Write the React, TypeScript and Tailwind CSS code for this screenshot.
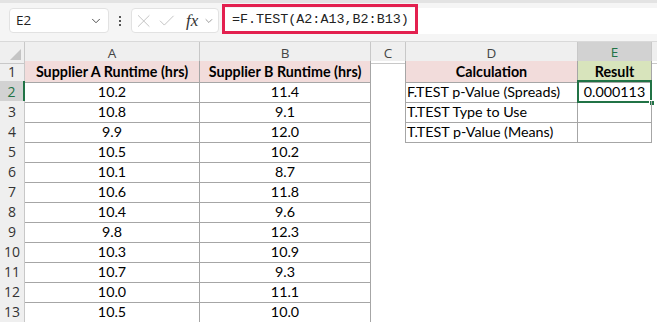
import { ChevronDown, X, Check } from "lucide-react";

const colA = ["10.2", "10.8", "9.9", "10.5", "10.1", "10.6", "10.4", "9.8", "10.3", "10.7", "10.0", "10.5"];
const colB = ["11.4", "9.1", "12.0", "10.2", "8.7", "11.8", "9.6", "12.3", "10.9", "9.3", "11.1", "10.0"];
const calc = ["F.TEST p-Value (Spreads)", "T.TEST Type to Use", "T.TEST p-Value (Means)"];

const grid = "grid grid-cols-[25px_175px_171px_35px_172px_74px_1fr]";
const cellFont = { fontFamily: "Lato, 'Liberation Sans', sans-serif" };
const uiFont = { fontFamily: "'Open Sans', 'Noto Sans', sans-serif" };

function Toolbar() {
  return (
    <div className="h-[41px] bg-[#f5f5f5] flex flex-col">
      <div className="h-[3px] bg-[#e3e3e3]" />
      <div className="flex items-start pt-[5px] relative">
        <div
          className="ml-[9px] w-[100px] h-[25px] bg-white border border-[#e2e2e2] rounded-[4px] flex items-center justify-between pl-[6px] pr-[5px] text-[13.5px] text-[#222]"
          style={uiFont}
        >
          <span>E2</span>
          <ChevronDown size={14} strokeWidth={1.6} className="text-[#444]" />
        </div>
        <div className="w-[22px] h-[25px] flex flex-col items-center justify-center gap-[2px]">
          <span className="w-[2px] h-[2px] bg-[#555]" />
          <span className="w-[2px] h-[2px] bg-[#555]" />
          <span className="w-[2px] h-[2px] bg-[#555]" />
        </div>
        <div className="w-[88px] h-[25px] bg-white border border-[#e2e2e2] rounded-[4px] flex items-center pl-[1px] pr-[3px]">
          <X size={22} strokeWidth={1} className="text-[#bdbdbd]" />
          <Check size={20} strokeWidth={1.1} className="text-[#bdbdbd] ml-[3px]" />
          <span
            className="ml-[9px] text-[17px] italic text-[#333] leading-none"
            style={{ fontFamily: "'Liberation Serif', serif" }}
          >
            fx
          </span>
          <ChevronDown size={12} strokeWidth={1.5} className="text-[#777] ml-[5px]" />
        </div>
        <div className="ml-[3px] flex-1 h-[26px] bg-white relative">
          <div className="absolute left-0 top-[-4px] w-[196px] h-[30px] border-[3px] border-[#e3204f]" />
          <span
            className="absolute left-[10px] top-[3px] text-[13.4px] text-[#222] leading-[18px]"
            style={{ fontFamily: "'Liberation Mono', monospace" }}
          >
            =F.TEST(A2:A13,B2:B13)
          </span>
        </div>
      </div>
    </div>
  );
}

function HeaderRow() {
  const letters = ["A", "B", "C", "D"];
  return (
    <div className={`${grid} h-[20px] bg-[#efefef] border-t border-[#d9d9d9]`} style={uiFont}>
      <div className="relative border-r border-b border-[#c8c8c8]">
        <svg className="absolute right-[3px] bottom-[3px]" width="11" height="11" viewBox="0 0 11 11">
          <polygon points="11,0 11,11 0,11" fill="#c4c4c4" />
        </svg>
      </div>
      {letters.map((l) => (
        <div
          key={l}
          className="flex items-center justify-center text-[13.5px] text-[#444] border-r border-b border-[#c8c8c8]"
        >
          {l}
        </div>
      ))}
      <div className="flex items-center justify-center text-[13.5px] text-[#217346] bg-[#d2d2d2] border-r border-[#c8c8c8] border-b-2 border-b-[#217346]">
        E
      </div>
      <div className="border-b border-[#c8c8c8]" />
    </div>
  );
}

function Row({ n }: { n: number }) {
  const selected = n === 2;
  const b = "border-r border-b border-[#a6a6a6]";
  const header = n === 1;
  const a = header ? "Supplier A Runtime (hrs)" : colA[n - 2];
  const bb = header ? "Supplier B Runtime (hrs)" : colB[n - 2];
  const hasCalc = n <= 4;
  const d = header ? "Calculation" : calc[n - 2];
  const e = header ? "Result" : n === 2 ? "0.000113" : "";

  return (
    <div className={`${grid} h-[20px] text-[14.3px] text-black`} style={cellFont}>
      <div
        className={
          selected
            ? "flex items-center justify-center text-[14px] text-[#217346] bg-[#d2d2d2] border-b border-[#c8c8c8] border-r-2 border-r-[#217346]"
            : "flex items-center justify-center text-[14px] text-[#333] bg-[#efefef] border-r border-b border-[#c8c8c8]"
        }
        style={uiFont}
      >
        {n}
      </div>
      <div className={`flex items-center justify-center ${b} ${header ? "bg-[#f2dcdb] font-bold" : ""}`}>{a}</div>
      <div className={`flex items-center justify-center ${b} ${header ? "bg-[#f2dcdb] font-bold" : ""}`}>{bb}</div>
      <div className={hasCalc ? "border-r border-[#a6a6a6]" : ""} />
      {hasCalc ? (
        <div
          className={`flex items-center ${b} ${header ? "justify-center bg-[#f2dcdb] font-bold" : "pl-[1px]"}`}
        >
          {d}
        </div>
      ) : (
        <div />
      )}
      {hasCalc ? (
        <div
          className={`relative flex items-center justify-center ${b} ${header ? "bg-[#d8e4bc] font-bold" : ""}`}
        >
          {e}
          {selected && (
            <>
              <div className="absolute left-[-1px] top-[-1px] right-[-1px] bottom-[-1px] border-2 border-[#217346]" />
              <div className="absolute right-[-4px] bottom-[-4px] w-[6px] h-[6px] bg-[#217346] border border-white" />
            </>
          )}
        </div>
      ) : (
        <div />
      )}
      <div />
    </div>
  );
}

export default function App() {
  return (
    <div className="w-[657px] h-[322px] overflow-hidden bg-white">
      <Toolbar />
      <HeaderRow />
      {Array.from({ length: 13 }, (_, i) => (
        <Row key={i} n={i + 1} />
      ))}
    </div>
  );
}
